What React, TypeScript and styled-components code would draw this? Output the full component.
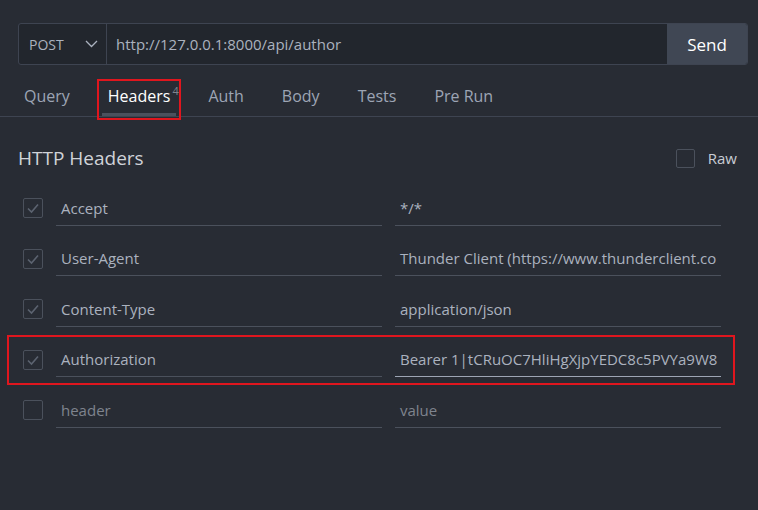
import React from "react";
import styled, { createGlobalStyle } from "styled-components";

const GlobalStyle = createGlobalStyle`
  html, body {
    margin: 0;
    background: #282c34;
  }
  body {
    font-family: "Open Sans", "Noto Sans", sans-serif;
    color: #abb2bf;
  }
`;

const Page = styled.div`
  width: 758px;
  height: 510px;
  box-sizing: border-box;
  padding: 23px 10px 0 18px;
`;

const UrlBar = styled.div`
  display: flex;
  height: 42px;
  box-sizing: border-box;
  border: 1px solid #3e4451;
  border-radius: 3px;
  background: #22262d;
  overflow: hidden;
`;

const Method = styled.div`
  width: 88px;
  display: flex;
  align-items: center;
  justify-content: space-between;
  padding: 0 8px 0 10px;
  box-sizing: border-box;
  border-right: 1px solid #3e4451;
  font-size: 14px;
  color: #abb2bf;
`;

const Url = styled.div`
  flex: 1;
  display: flex;
  align-items: center;
  padding-left: 9px;
  font-size: 15px;
  color: #abb2bf;
`;

const SendButton = styled.button`
  width: 80px;
  border: none;
  background: #404754;
  color: #ffffff;
  font-family: inherit;
  font-size: 17px;
  padding: 0;
`;

const Tabs = styled.div`
  display: flex;
  gap: 26px;
  margin: 11px -10px 0 -18px;
  padding-left: 18px;
  border-bottom: 1px solid #3e4451;
`;

const Tab = styled.div<{ $active?: boolean; $marked?: boolean }>`
  position: relative;
  height: 40px;
  line-height: 40px;
  padding: 0 6px;
  font-size: 16px;
  color: ${(p) => (p.$active ? "#ffffff" : "#9da5b4")};
  box-shadow: ${(p) => (p.$active ? "inset 0 -3px 0 #4b515d" : "none")};

  ${(p) =>
    p.$marked &&
    `
    &::after {
      content: "";
      position: absolute;
      top: 3px;
      left: -5px;
      right: -5px;
      bottom: -4px;
      border: 2px solid #e0161e;
    }
  `}
`;

const Count = styled.span`
  position: absolute;
  left: calc(100% - 4px);
  top: -5px;
  font-size: 11px;
  color: #7f848e;
`;

const TitleRow = styled.div`
  display: flex;
  align-items: center;
  justify-content: space-between;
  height: 40px;
  margin-top: 21px;
  padding-right: 11px;
`;

const Title = styled.h2`
  margin: 0;
  font-size: 19px;
  font-weight: 400;
  color: #d0d3d8;
`;

const RawToggle = styled.label`
  display: flex;
  align-items: center;
  gap: 13px;
  font-size: 15px;
  color: #c8ccd4;
`;

const Box = styled.span<{ $size?: number }>`
  display: inline-flex;
  align-items: center;
  justify-content: center;
  width: ${(p) => p.$size ?? 20}px;
  height: ${(p) => p.$size ?? 20}px;
  box-sizing: border-box;
  border: 1px solid #4b515c;
  border-radius: 2px;
  flex-shrink: 0;
`;

const Rows = styled.div`
  margin-top: 5px;
  margin-right: 27px;
`;

const Row = styled.div<{ $marked?: boolean }>`
  position: relative;
  display: flex;
  align-items: center;
  gap: 13px;
  height: 50.5px;
  padding-left: 5px;

  ${(p) =>
    p.$marked &&
    `
    &::after {
      content: "";
      position: absolute;
      top: 0;
      bottom: 0;
      left: -11px;
      right: -14px;
      border: 2px solid #e0161e;
    }
  `}
`;

const Field = styled.div<{ $focus?: boolean; $placeholder?: boolean }>`
  flex: 1;
  min-width: 0;
  height: 35px;
  line-height: 34px;
  box-sizing: border-box;
  padding-left: 5px;
  border-bottom: 1px solid ${(p) => (p.$focus ? "#9da5b4" : "#4b515c")};
  font-size: 15px;
  color: ${(p) => (p.$placeholder ? "#7f848e" : "#abb2bf")};
  white-space: nowrap;
  overflow: hidden;
`;

const Check = () => (
  <svg width="14" height="14" viewBox="0 0 14 14">
    <polyline points="2,7.5 5.5,11 12,3.5" fill="none" stroke="#5c6370" strokeWidth="1.6" />
  </svg>
);

const headers = [
  { key: "Accept", value: "*/*", on: true },
  { key: "User-Agent", value: "Thunder Client (https://www.thunderclient.co", on: true },
  { key: "Content-Type", value: "application/json", on: true },
  {
    key: "Authorization",
    value: "Bearer 1|tCRuOC7HliHgXjpYEDC8c5PVYa9W8",
    on: true,
    focus: true,
  },
];

export default function App() {
  return (
    <Page>
      <GlobalStyle />
      <UrlBar>
        <Method>
          POST
          <svg width="13" height="8" viewBox="0 0 13 8">
            <polyline points="1,1 6.5,6.5 12,1" fill="none" stroke="#abb2bf" strokeWidth="1.3" />
          </svg>
        </Method>
        <Url>http://127.0.0.1:8000/api/author</Url>
        <SendButton>Send</SendButton>
      </UrlBar>

      <Tabs>
        <Tab>Query</Tab>
        <Tab $active $marked>
          Headers
          <Count>4</Count>
        </Tab>
        <Tab>Auth</Tab>
        <Tab>Body</Tab>
        <Tab>Tests</Tab>
        <Tab>Pre Run</Tab>
      </Tabs>

      <TitleRow>
        <Title>HTTP Headers</Title>
        <RawToggle>
          <Box $size={19} />
          Raw
        </RawToggle>
      </TitleRow>

      <Rows>
        {headers.map((h) => (
          <Row key={h.key} $marked={h.focus}>
            <Box>{h.on && <Check />}</Box>
            <Field>{h.key}</Field>
            <Field $focus={h.focus}>{h.value}</Field>
          </Row>
        ))}
        <Row>
          <Box />
          <Field $placeholder>header</Field>
          <Field $placeholder>value</Field>
        </Row>
      </Rows>
    </Page>
  );
}
